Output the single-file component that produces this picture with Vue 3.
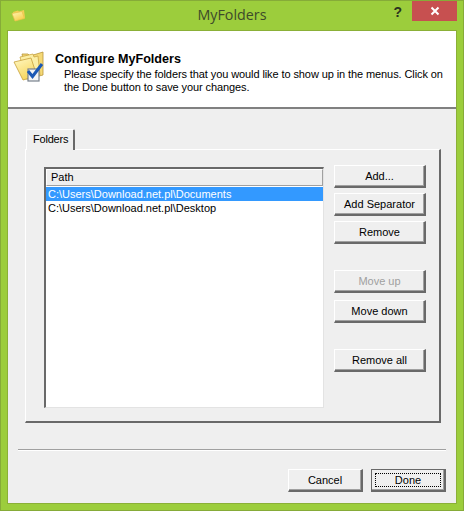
<template>
  <div class="window">
    <div class="titlebar">
      <div class="title-left">
        <svg class="app-icon" width="16" height="16" viewBox="0 0 16 16">
          <defs>
            <linearGradient id="smallFolder" x1="0" y1="0" x2="0.6" y2="1">
              <stop offset="0" stop-color="#fff6b8" />
              <stop offset="1" stop-color="#f6cf4a" />
            </linearGradient>
          </defs>
          <path d="M2 5 L7 3.5 L8 4.5 L13 3 L14 11 L4 14 Z" fill="#f2cf55" />
          <path d="M1 6.5 L11 4.5 L13.5 11.5 L4 14 Z" fill="url(#smallFolder)" stroke="#e8c04a" stroke-width="0.7" />
        </svg>
      </div>
      <div class="title-text">MyFolders</div>
      <div class="title-right">
        <span class="help">?</span>
        <div class="close">
          <svg width="10" height="10" viewBox="0 0 10 10">
            <path d="M1.5 1.5 L8.5 8.5 M8.5 1.5 L1.5 8.5" stroke="#fff" stroke-width="2" />
          </svg>
        </div>
      </div>
    </div>

    <div class="client">
      <div class="banner">
        <svg class="banner-icon" width="32" height="32" viewBox="0 0 32 32">
          <defs>
            <linearGradient id="bigFolder" x1="0" y1="0" x2="0.5" y2="1">
              <stop offset="0" stop-color="#fff8c4" />
              <stop offset="1" stop-color="#f8d65c" />
            </linearGradient>
          </defs>
          <path d="M9 3 L15 3 L17 5 L30 1 L30 24 L14 28 Z" fill="#f5d976" stroke="#b8953a" stroke-width="0.8" />
          <path d="M7 6 L20 3 L21 6 L25 5 L27 24 L13 28 Z" fill="#fbeea5" stroke="#caa544" stroke-width="0.8" />
          <path d="M1 11 L18 7 L24 25 L10 29 Z" fill="url(#bigFolder)" stroke="#c79f3a" stroke-width="0.8" />
          <rect x="15" y="18" width="11" height="12" fill="#f4f4f4" stroke="#77808c" stroke-width="1.2" />
          <path d="M15 20 L19.5 25.5 L29 13" fill="none" stroke="#1c59b5" stroke-width="3" />
        </svg>
        <div class="banner-text">
          <div class="banner-title">Configure MyFolders</div>
          <div class="banner-desc">Please specify the folders that you would like to show up in the menus. Click on<br />the Done button to save your changes.</div>
        </div>
      </div>

      <div class="body">
        <div class="tab">Folders</div>
        <div class="pane">
          <div class="list">
            <div class="list-head">Path</div>
            <div
              v-for="(p, i) in paths"
              :key="p"
              class="list-row"
              :class="{ selected: i === 0 }"
            >{{ p }}</div>
          </div>
          <div class="side">
            <button class="btn add">Add...</button>
            <button class="btn sep">Add Separator</button>
            <button class="btn rem">Remove</button>
            <button class="btn up" disabled>Move up</button>
            <button class="btn down">Move down</button>
            <button class="btn all">Remove all</button>
          </div>
        </div>
      </div>

      <div class="rule"></div>

      <div class="footer">
        <button class="btn foot">Cancel</button>
        <button class="btn foot default"><span class="focus">Done</span></button>
      </div>
    </div>
  </div>
</template>

<script setup>
const paths = [
  'C:\\Users\\Download.net.pl\\Documents',
  'C:\\Users\\Download.net.pl\\Desktop',
]
</script>

<style>
html, body { margin: 0; background: #9ccd3c; }
</style>

<style scoped>
.window {
  box-sizing: border-box;
  width: 464px;
  height: 511px;
  display: flex;
  flex-direction: column;
  background: #9ccd3c;
  border: 1px solid #86ab38;
  font-family: "Liberation Sans", Arial, sans-serif;
  font-size: 11px;
  color: #000;
}

.titlebar {
  height: 30px;
  flex-shrink: 0;
  display: grid;
  grid-template-columns: 1fr auto 1fr;
}
.title-left { padding: 6px 0 0 10px; }
.app-icon { display: block; }
.title-text {
  font-family: "Open Sans", sans-serif;
  font-size: 14.3px;
  line-height: 28px;
  color: #3d4a2a;
}
.title-right { display: flex; justify-content: flex-end; align-items: flex-start; }
.help {
  font-family: "Liberation Sans", sans-serif;
  font-weight: bold;
  font-size: 14px;
  line-height: 22px;
  color: #2b3320;
  margin-right: 10px;
}
.close {
  width: 45px;
  height: 20px;
  margin-right: 6px;
  background: #c75050;
  display: flex;
  align-items: center;
  justify-content: center;
}

.client {
  flex: 1;
  margin: 0 7px 7px;
  background: #efefef;
  box-shadow: 0 0 0 1px #8bb037;
  display: flex;
  flex-direction: column;
}

.banner {
  box-sizing: border-box;
  height: 78px;
  background: #fff;
  border-bottom: 2px solid #808080;
  display: flex;
  padding: 21px 0 0 5px;
}
.banner-icon { flex-shrink: 0; margin-right: 10px; margin-top: -1px; }
.banner-title { font-weight: bold; font-size: 12.6px; line-height: 15px; color: #000; }
.banner-desc { padding: 1px 0 0 9px; line-height: 13px; font-size: 11px; letter-spacing: -0.095px; white-space: nowrap; }

.body { padding: 20px 0 0 17px; }
.tab {
  box-sizing: border-box;
  width: 49px;
  height: 21px;
  margin-left: 1px;
  padding: 3px 0 0 6px;
  background: #efefef;
  border: 1px solid #fff;
  border-bottom: none;
  border-right: 2px solid #696969;
  border-radius: 2px 2px 0 0;
  position: relative;
  z-index: 1;
  margin-bottom: -1px;
  letter-spacing: -0.2px;
}
.pane {
  box-sizing: border-box;
  width: 416px;
  height: 274px;
  border: 1px solid #fff;
  border-right: 2px solid #696969;
  border-bottom: 2px solid #696969;
  padding: 17px 0 0 18px;
  display: flex;
  align-items: flex-start;
}

.list {
  box-sizing: border-box;
  width: 280px;
  height: 241px;
  background: #fff;
  border: 1px solid #e3e3e3;
  border-top: 2px solid #696969;
  border-left: 2px solid #696969;
  flex-shrink: 0;
}
.list-head {
  box-sizing: border-box;
  height: 17px;
  line-height: 15px;
  padding-left: 4px;
  background: #efefef;
  border: 1px solid #a0a0a0;
  border-top-color: #fff;
  border-left-color: #fff;
  margin-bottom: 1px;
}
.list-row {
  height: 14px;
  line-height: 14px;
  padding-left: 2px;
  color: #000;
  white-space: nowrap;
}
.list-row.selected { background: #3399ff; color: #fff; }

.side {
  display: flex;
  flex-direction: column;
  margin: -2px 0 0 10px;
  width: 92px;
}
.btn {
  box-sizing: border-box;
  display: block;
  padding: 0;
  height: 23px;
  font-family: inherit;
  font-size: 11px;
  color: #000;
  background: #efefef;
  border: 1px solid #fff;
  border-right: 2px solid #696969;
  border-bottom: 2px solid #696969;
  box-shadow: inset -1px -1px 0 #a0a0a0;
}
.side .btn { width: 92px; }
.sep { margin-top: 5px; }
.rem { margin-top: 5px; }
.up { margin-top: 26px; color: #a0a0a0; }
.down { margin-top: 7px; }
.all { margin-top: 26px; }

.rule {
  margin: 26px 10px 0 10px;
  height: 1px;
  background: #a0a0a0;
  border-bottom: 1px solid #fff;
}

.footer {
  display: flex;
  justify-content: flex-end;
  gap: 8px;
  padding: 18px 10px 0 0;
}
.foot { width: 75px; }
.default {
  border: 1px solid #696969;
  border-right: 2px solid #696969;
  border-bottom: 2px solid #696969;
  padding: 3px;
}
.focus {
  display: flex;
  align-items: center;
  justify-content: center;
  height: 100%;
  box-sizing: border-box;
  border: 1px dotted #000;
}
</style>
